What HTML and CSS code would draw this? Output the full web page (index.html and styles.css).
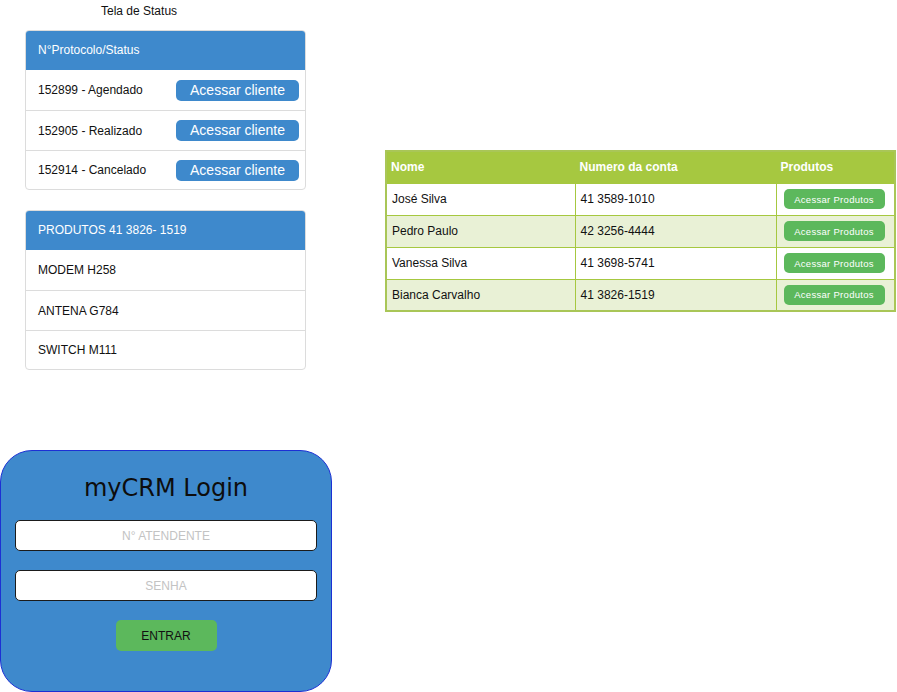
FILE: index.html
```html
<!DOCTYPE html>
<html lang="pt-BR">
<head>
<meta charset="utf-8">
<title>myCRM</title>
<link rel="stylesheet" href="styles.css">
</head>
<body>
<div class="page">
  <div class="left">
    <div class="screen-title">Tela de Status</div>

    <div class="panel">
      <div class="panel-heading">N°Protocolo/Status</div>
      <div class="panel-row">
        <span>152899 - Agendado</span>
        <button class="btn-blue" type="button">Acessar cliente</button>
      </div>
      <div class="panel-row">
        <span>152905 - Realizado</span>
        <button class="btn-blue" type="button">Acessar cliente</button>
      </div>
      <div class="panel-row">
        <span>152914 - Cancelado</span>
        <button class="btn-blue" type="button">Acessar cliente</button>
      </div>
    </div>

    <div class="panel panel-products">
      <div class="panel-heading">PRODUTOS 41 3826- 1519</div>
      <div class="panel-row">MODEM H258</div>
      <div class="panel-row">ANTENA G784</div>
      <div class="panel-row">SWITCH M111</div>
    </div>

    <form class="login">
      <div class="login-title">myCRM Login</div>
      <input class="login-input" type="text" placeholder="N° ATENDENTE">
      <input class="login-input" type="password" placeholder="SENHA">
      <button class="btn-enter" type="button">ENTRAR</button>
    </form>
  </div>

  <div class="right">
    <table class="clients">
      <colgroup>
        <col class="col-name">
        <col class="col-account">
        <col class="col-products">
      </colgroup>
      <thead>
        <tr><th>Nome</th><th>Numero da conta</th><th>Produtos</th></tr>
      </thead>
      <tbody>
        <tr><td>José Silva</td><td>41 3589-1010</td><td><button class="btn-green" type="button">Acessar Produtos</button></td></tr>
        <tr class="alt"><td>Pedro Paulo</td><td>42 3256-4444</td><td><button class="btn-green" type="button">Acessar Produtos</button></td></tr>
        <tr><td>Vanessa Silva</td><td>41 3698-5741</td><td><button class="btn-green" type="button">Acessar Produtos</button></td></tr>
        <tr class="alt"><td>Bianca Carvalho</td><td>41 3826-1519</td><td><button class="btn-green" type="button">Acessar Produtos</button></td></tr>
      </tbody>
    </table>
  </div>
</div>
</body>
</html>
```
FILE: styles.css
```css
* { box-sizing: border-box; }

html, body {
  margin: 0;
  padding: 0;
  background: #ffffff;
}

body {
  font-family: "Liberation Sans", Arial, sans-serif;
  font-size: 12px;
  color: #111;
}

.page {
  display: flex;
  align-items: flex-start;
}

.left {
  width: 332px;
  flex: none;
  display: flex;
  flex-direction: column;
}

.screen-title {
  height: 22px;
  line-height: 22px;
  padding-left: 101px;
  color: #111;
}

.panel {
  margin: 8px 0 0 25px;
  width: 281px;
  border: 1px solid #dcdcdc;
  border-radius: 4px;
  overflow: hidden;
  background: #fff;
}

.panel-products {
  margin-top: 20px;
}

.panel-heading {
  height: 40px;
  margin: -1px -1px 0 -1px;
  padding-left: 13px;
  display: flex;
  align-items: center;
  background: #3e89cc;
  color: #fff;
  border-radius: 4px 4px 0 0;
}

.panel-row {
  height: 40px;
  padding: 0 6px 0 12px;
  display: flex;
  align-items: center;
  justify-content: space-between;
  border-top: 1px solid #dcdcdc;
}

.panel-row:last-child {
  height: 39px;
}

.panel-heading + .panel-row {
  border-top: none;
}

.btn-blue {
  width: 123px;
  height: 21px;
  padding: 0;
  border: none;
  border-radius: 5px;
  background: #3e89cc;
  color: #fff;
  font-family: "Liberation Sans", Arial, sans-serif;
  font-size: 14px;
  line-height: 21px;
}

.login {
  margin: 80px 0 0 0;
  width: 332px;
  height: 242px;
  padding: 0 14px;
  border: 1px solid #1c30d4;
  border-radius: 32px;
  background: #3e89cc;
  display: flex;
  flex-direction: column;
  align-items: center;
}

.login-title {
  margin-top: 22px;
  height: 30px;
  line-height: 30px;
  font-family: "DejaVu Sans", Verdana, sans-serif;
  font-size: 24px;
  color: #0d0d0d;
}

.login-input {
  margin-top: 17px;
  width: 100%;
  height: 31px;
  border: 1px solid #1b1b1b;
  border-radius: 5px;
  background: #fff;
  text-align: center;
  font-family: "Liberation Sans", Arial, sans-serif;
  font-size: 12px;
  color: #333;
}

.login-input + .login-input {
  margin-top: 19px;
}

.login-input::placeholder {
  color: #c3c3c3;
}

.btn-enter {
  margin-top: 19px;
  width: 101px;
  height: 31px;
  border: none;
  border-radius: 5px;
  background: #5cb85c;
  color: #111;
  font-family: "Liberation Sans", Arial, sans-serif;
  font-size: 12px;
}

.right {
  padding: 150px 0 0 53px;
}

.clients {
  width: 511px;
  border-collapse: collapse;
  border: 2px solid #a9c657;
}

.col-name { width: 190px; }
.col-account { width: 202px; }
.col-products { width: 119px; }

.clients th {
  height: 32px;
  padding: 0 4px;
  background: #a6c840;
  color: #fff;
  font-size: 12px;
  font-weight: bold;
  text-align: left;
  border: 1px solid #a6c840;
}

.clients th + th {
  border-left: 1px solid #8fb22e;
}

.clients td {
  height: 32px;
  padding: 0 4px 0 5px;
  border: 1px solid #a6c840;
  color: #111;
  font-size: 12px;
  vertical-align: middle;
}

.clients tr.alt td {
  background: #e9f1d6;
}

.clients td:last-child {
  padding-left: 7px;
}

.btn-green {
  display: block;
  width: 101px;
  height: 20px;
  padding: 0;
  border: none;
  border-radius: 5px;
  background: #5cb85c;
  color: #fff;
  font-family: "Liberation Sans", Arial, sans-serif;
  font-size: 9.5px;
  letter-spacing: 0.3px;
}
```
